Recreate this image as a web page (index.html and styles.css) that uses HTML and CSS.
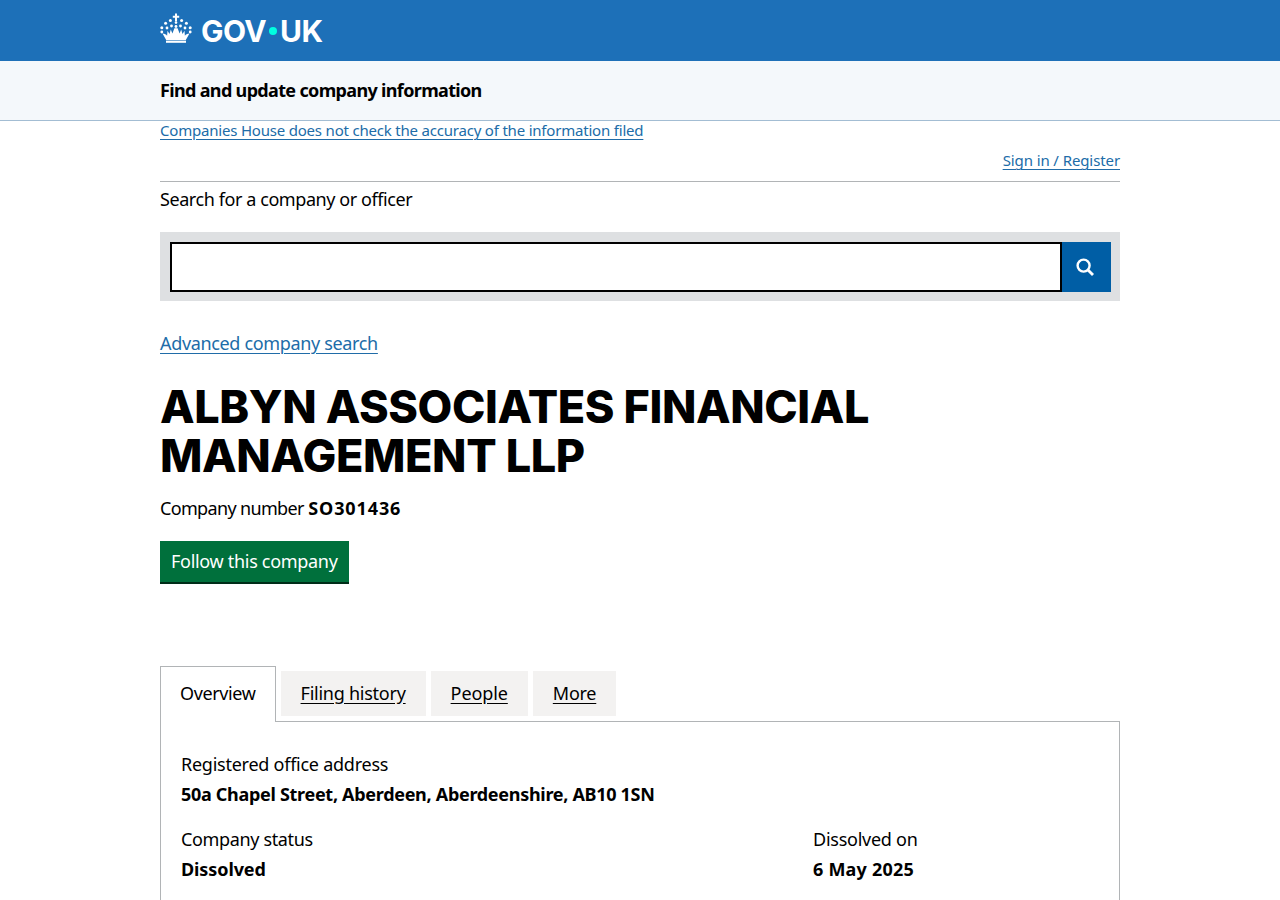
FILE: index.html
```html
<!DOCTYPE html>
<html lang="en">
<head>
<meta charset="utf-8">
<title>ALBYN ASSOCIATES FINANCIAL MANAGEMENT LLP</title>
<link rel="stylesheet" href="styles.css">
</head>
<body>
<header class="gov-header">
  <div class="wrap gov-header-inner">
    <svg class="crown" viewBox="0 0 32 30" width="32" height="30" aria-hidden="true">
      <g fill="#fff">
        <path d="M15 0.5h2v2.2h2.2v2H17v3.6h-2V4.7h-2.2v-2H15z"/>
        <circle cx="16" cy="9.6" r="1.3"/>
        <circle cx="10.4" cy="7.4" r="1.5"/>
        <circle cx="21.6" cy="7.4" r="1.5"/>
        <circle cx="5.6" cy="10.2" r="1.5"/>
        <circle cx="26.4" cy="10.2" r="1.5"/>
        <circle cx="1.8" cy="14.8" r="1.5"/>
        <circle cx="30.2" cy="14.8" r="1.5"/>
        <circle cx="1.8" cy="19" r="1.4"/>
        <circle cx="30.2" cy="19" r="1.4"/>
        <circle cx="7" cy="15" r="1.4"/>
        <circle cx="25" cy="15" r="1.4"/>
        <circle cx="11.5" cy="13" r="1.4"/>
        <circle cx="20.5" cy="13" r="1.4"/>
        <circle cx="16" cy="13.5" r="1.4"/>
        <path d="M2.5 20.5c2.4 0 3.6 1 4.6 2.2l.4-5 2 3.4 1.3-4.6 1.6 4 2-5.2h3.2l2 5.2 1.6-4 1.3 4.6 2-3.4.4 5c1-1.2 2.2-2.2 4.6-2.2l-3.7 6.5H6.2z"/>
        <rect x="6" y="27.6" width="20" height="2.2"/>
      </g>
    </svg>
    <span class="gov-word">GOV<span class="gov-dot"></span>UK</span>
  </div>
</header>
<div class="service-bar">
  <div class="wrap"><a class="service-name">Find and update company information</a></div>
</div>
<main class="wrap">
  <p class="notice"><a href="#" class="link">Companies House does not check the accuracy of the information filed</a></p>
  <div class="signin"><a href="#" class="link">Sign in / Register</a></div>
  <form class="search-form">
    <label class="search-label" for="q">Search for a company or officer</label>
    <div class="search-box">
      <input class="search-input" id="q" type="text">
      <button class="search-button" type="button" aria-label="Search">
        <svg viewBox="0 0 20 20" width="20" height="20" aria-hidden="true">
          <circle cx="8.6" cy="8.6" r="6" fill="none" stroke="#fff" stroke-width="2.4"/>
          <path d="M13 13l5 5" stroke="#fff" stroke-width="2.8" fill="none"/>
        </svg>
      </button>
    </div>
  </form>
  <p class="advanced"><a href="#" class="link">Advanced company search</a></p>
  <h1 class="company-name">ALBYN ASSOCIATES FINANCIAL MANAGEMENT LLP</h1>
  <p class="company-number"><span class="number-label">Company number</span> <strong class="number-value">SO301436</strong></p>
  <a href="#" class="follow">Follow this company</a>
  <nav class="tabs">
    <span class="tab tab-active">Overview</span>
    <a href="#" class="tab">Filing history</a>
    <a href="#" class="tab tab-short">People</a>
    <a href="#" class="tab">More</a>
  </nav>
  <section class="panel">
    <dl class="field">
      <dt>Registered office address</dt>
      <dd class="address">50a Chapel Street, Aberdeen, Aberdeenshire, AB10 1SN</dd>
    </dl>
    <div class="field-row">
      <dl class="field field-left">
        <dt class="status-label">Company status</dt>
        <dd>Dissolved</dd>
      </dl>
      <dl class="field">
        <dt>Dissolved on</dt>
        <dd class="date">6 May 2025</dd>
      </dl>
    </div>
  </section>
</main>
</body>
</html>
```
FILE: styles.css
```css
* { box-sizing: border-box; }
html, body { margin: 0; padding: 0; }
body {
  font-family: "Noto Sans", "Liberation Sans", sans-serif;
  color: #000;
  background: #fff;
  font-size: 18px;
  letter-spacing: -0.25px;
  height: 900px;
  overflow: hidden;
}
.wrap { width: 960px; margin: 0 auto; }
.gov-header { background: #1d70b8; height: 61px; }
.gov-header-inner { display: flex; align-items: center; height: 61px; gap: 9px; }
.crown { display: block; margin-top: -5px; }
.gov-word { color: #fff; font-family: "Inter", "Liberation Sans", sans-serif; font-weight: 700; font-size: 30px; line-height: 36px; letter-spacing: -0.6px; display: flex; align-items: center; }
.gov-dot { width: 8px; height: 8px; border-radius: 50%; background: #00ffe0; margin: 0 3px 0 3px; }
.service-bar { background: #f4f8fb; height: 60px; border-bottom: 1px solid #a3bdd3; display: flex; align-items: center; padding-bottom: 2px; }
.service-name { font-weight: 700; font-size: 18px; color: #000; letter-spacing: -0.66px; }
.link { color: #206ca8; text-decoration: underline; text-underline-offset: 3px; text-decoration-thickness: 1px; }
.notice { margin: 0; font-size: 15px; line-height: 20px; letter-spacing: -0.2px; position: relative; top: -1px; }
.signin { text-align: right; font-size: 15px; line-height: 18px; padding: 10px 0 12px; border-bottom: 1px solid #b1b4b6; letter-spacing: -0.1px; }
.search-form { display: block; }
.search-label { display: block; font-size: 18px; line-height: 25px; padding-top: 5px; margin-bottom: 20px; letter-spacing: -0.42px; }
.search-box { display: flex; background: #dee0e2; padding: 10px 9px 9px 10px; height: 69px; }
.search-input { flex: 1; height: 50px; border: 2px solid #000; background: #fff; padding: 0; margin: 0; }
.search-button { width: 49px; height: 50px; background: #005ea5; border: 0; padding: 0 4px 0 0; display: flex; align-items: center; justify-content: center; }
.advanced { margin: 30px 0 0; font-size: 18px; line-height: 25px; letter-spacing: -0.34px; }
.company-name { margin: 26px 0 0; font-family: "Inter", "Liberation Sans", sans-serif; font-size: 45px; line-height: 49px; font-weight: 800; letter-spacing: -0.4px; }
.company-number { margin: 16px 0 0; font-size: 18px; line-height: 25px; }
.number-label { letter-spacing: -0.66px; }
.number-value { letter-spacing: 0.9px; }
.follow { display: inline-block; margin-top: 20px; background: #00703c; color: #fff; text-decoration: none; font-size: 18px; line-height: 25px; padding: 8px 11px 7px; border-bottom: 2px solid #002d18; height: 43px; letter-spacing: -0.3px; }
.tabs { display: flex; align-items: flex-end; gap: 5px; margin-top: 81px; height: 56px; position: relative; }
.tab { display: flex; align-items: center; justify-content: center; height: 45px; margin-bottom: 5px; padding: 0 20px 2px; background: #f3f2f1; color: #000; font-size: 18px; text-underline-offset: 3px; }
.tab-short { letter-spacing: -0.1px; }
.tab-active { background: #fff; height: 56px; margin-bottom: -1px; border: 1px solid #b1b4b6; border-bottom: 0; padding: 0 19px 4px; position: relative; z-index: 1; letter-spacing: -0.37px; }
.panel { border: 1px solid #b1b4b6; border-bottom: 0; padding: 27px 20px 0; height: 300px; }
.field { margin: 0 0 15px; }
.field dt { font-size: 18px; line-height: 30px; }
.field dd { margin: 0; font-weight: 700; font-size: 18px; line-height: 30px; letter-spacing: -0.1px; }
.field .address { letter-spacing: -0.3px; }
.field .date { letter-spacing: 0.2px; }
.field .status-label { letter-spacing: -0.35px; }
.field-row { display: flex; }
.field-left { width: 632px; }
```
